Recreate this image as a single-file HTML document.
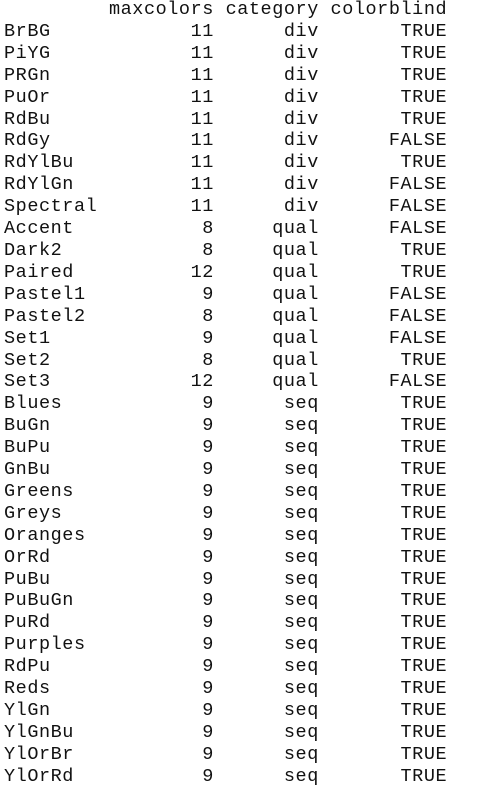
<!DOCTYPE html>
<html><head><style>
html,body{margin:0;padding:0;background:#fff;width:489px;height:795px;overflow:hidden}
pre{margin:0;position:absolute;left:4px;top:-1px;font-family:"Liberation Mono","DejaVu Sans Mono",monospace;font-size:18.5px;letter-spacing:0.56px;line-height:21.9px;color:#111}
</style></head><body><pre>         maxcolors category colorblind
BrBG            11      div       TRUE
PiYG            11      div       TRUE
PRGn            11      div       TRUE
PuOr            11      div       TRUE
RdBu            11      div       TRUE
RdGy            11      div      FALSE
RdYlBu          11      div       TRUE
RdYlGn          11      div      FALSE
Spectral        11      div      FALSE
Accent           8     qual      FALSE
Dark2            8     qual       TRUE
Paired          12     qual       TRUE
Pastel1          9     qual      FALSE
Pastel2          8     qual      FALSE
Set1             9     qual      FALSE
Set2             8     qual       TRUE
Set3            12     qual      FALSE
Blues            9      seq       TRUE
BuGn             9      seq       TRUE
BuPu             9      seq       TRUE
GnBu             9      seq       TRUE
Greens           9      seq       TRUE
Greys            9      seq       TRUE
Oranges          9      seq       TRUE
OrRd             9      seq       TRUE
PuBu             9      seq       TRUE
PuBuGn           9      seq       TRUE
PuRd             9      seq       TRUE
Purples          9      seq       TRUE
RdPu             9      seq       TRUE
Reds             9      seq       TRUE
YlGn             9      seq       TRUE
YlGnBu           9      seq       TRUE
YlOrBr           9      seq       TRUE
YlOrRd           9      seq       TRUE</pre></body></html>
